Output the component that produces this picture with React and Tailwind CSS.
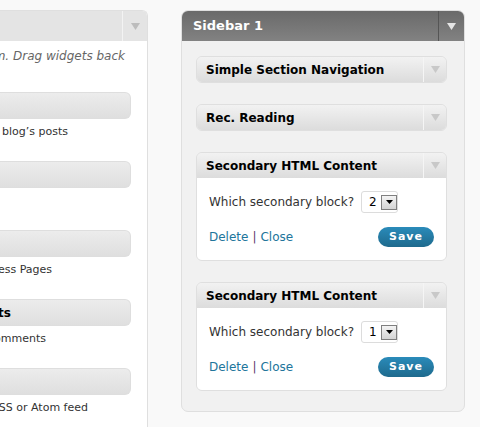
import React from 'react';

const font = { fontFamily: '"DejaVu Sans", Verdana, sans-serif' };

function Arrow({ color = '#bcbcbc' }) {
    return (
        <svg width="9" height="7" viewBox="0 0 9 7">
            <path d="M0 0 H9 L4.5 7 Z" fill={color} />
        </svg>
    );
}

// clipped widget from the available-widgets column
function AvailableWidget({ title, titleEnd, desc, descEnd }) {
    return (
        <div className="flex flex-col">
            <div className="h-[27px] w-[131px] rounded-r-[6px] border border-l-0 border-[#dedede] bg-gradient-to-b from-[#ececec] to-[#dfdfdf] flex items-center overflow-hidden">
                {title && (
                    <div className="flex justify-end shrink-0" style={{ width: titleEnd }}>
                        <span className="whitespace-nowrap text-[12px] font-bold text-black">{title}</span>
                    </div>
                )}
            </div>
            <div className="h-[42px] pt-[4px] flex">
                <div className="flex justify-end shrink-0" style={{ width: descEnd }}>
                    <span className="whitespace-nowrap text-[11px] text-[#333] leading-[18px]">{desc}</span>
                </div>
            </div>
        </div>
    );
}

function SidebarWidget({ title, children }) {
    return (
        <div className="rounded-[6px] border border-[#dfdfdf] overflow-hidden">
            <div className="h-[25px] flex bg-gradient-to-b from-[#f2f2f2] to-[#dcdcdc]">
                <div className="flex-1 flex items-center pl-[9px] text-[12px] font-bold text-black">{title}</div>
                <div className="w-[23px] border-l border-[#f5f5f5] flex items-center justify-center">
                    <Arrow color="#c8c8c8" />
                </div>
            </div>
            {children}
        </div>
    );
}

function SecondaryBody({ value }) {
    return (
        <div className="bg-white px-[12px] pt-[13px] pb-[13px]">
            <div className="flex items-center gap-[7px] text-[12px] text-[#333]">
                <span>Which secondary block?</span>
                <div className="h-[22px] w-[37px] rounded-[3px] border border-[#dcdcdc] bg-white flex items-center pl-[7px] gap-[3px]">
                    <span className="w-[9px] text-black text-[12px]">{value}</span>
                    <div className="w-[16px] h-[15px] border border-[#7f7f7f] bg-gradient-to-b from-[#f4f4f4] to-[#d4d4d4] flex items-center justify-center">
                        <svg width="7" height="4" viewBox="0 0 7 4">
                            <path d="M0 0 H7 L3.5 4 Z" fill="#000" />
                        </svg>
                    </div>
                </div>
            </div>
            <div className="mt-[14px] flex items-center justify-between">
                <div className="text-[12px] text-[#21759b]">
                    <span>Delete</span>
                    <span className="text-[#5b3a6e] mx-[4px]">|</span>
                    <span>Close</span>
                </div>
                <button className="h-[20px] w-[56px] rounded-full bg-gradient-to-b from-[#2a8bba] to-[#1e6a8d] text-white text-[11px] font-bold tracking-[1px] flex items-center justify-center">
                    Save
                </button>
            </div>
        </div>
    );
}

export default function App() {
    return (
        <div className="w-[480px] h-[427px] bg-[#f9f9f9] flex items-start overflow-hidden" style={font}>
            {/* Available widgets (clipped) */}
            <div className="w-[148px] h-full shrink-0 pt-[10px] flex flex-col">
                <div className="flex-1 bg-white border-r border-t border-[#dfdfdf] rounded-tr-[6px] flex flex-col">
                    <div className="h-[30px] flex bg-[#e4e4e4] rounded-tr-[5px]">
                        <div className="flex-1" />
                        <div className="w-[25px] border-l border-[#f3f3f3] flex items-center justify-center">
                            <Arrow />
                        </div>
                    </div>
                    <div className="h-[51px] pt-[6px] flex">
                        <div className="flex justify-end shrink-0 w-[125px]">
                            <span className="whitespace-nowrap italic text-[12px] text-[#666]">to activate them. Drag widgets back</span>
                        </div>
                    </div>
                    <AvailableWidget desc="A calendar of your blog’s posts" descEnd={68} />
                    <AvailableWidget desc="Your blogroll" descEnd={0} />
                    <AvailableWidget desc="Your blog’s WordPress Pages" descEnd={52} />
                    <AvailableWidget title="Recent Comments" titleEnd={11} desc="The most recent comments" descEnd={46} />
                    <AvailableWidget desc="Entries from any RSS or Atom feed" descEnd={88} />
                </div>
            </div>

            <div className="w-[33px] shrink-0" />

            {/* Sidebar 1 */}
            <div className="w-[284px] shrink-0 mt-[10px] rounded-[7px] border border-[#dfdfdf] bg-[#f1f1f1] overflow-hidden">
                <div className="h-[30px] flex bg-gradient-to-b from-[#6a6a6a] to-[#828282]">
                    <div className="flex-1 flex items-center pl-[11px] text-[13px] font-bold text-white">Sidebar 1</div>
                    <div className="w-[26px] border-l border-[#555] flex items-center justify-center">
                        <Arrow color="#e5e5e5" />
                    </div>
                </div>
                <div className="pl-[14px] pr-[17px] pt-[15px] pb-[20px] flex flex-col gap-[21px]">
                    <SidebarWidget title="Simple Section Navigation" />
                    <SidebarWidget title="Rec. Reading" />
                    <SidebarWidget title="Secondary HTML Content">
                        <SecondaryBody value="2" />
                    </SidebarWidget>
                    <SidebarWidget title="Secondary HTML Content">
                        <SecondaryBody value="1" />
                    </SidebarWidget>
                </div>
            </div>
        </div>
    );
}
